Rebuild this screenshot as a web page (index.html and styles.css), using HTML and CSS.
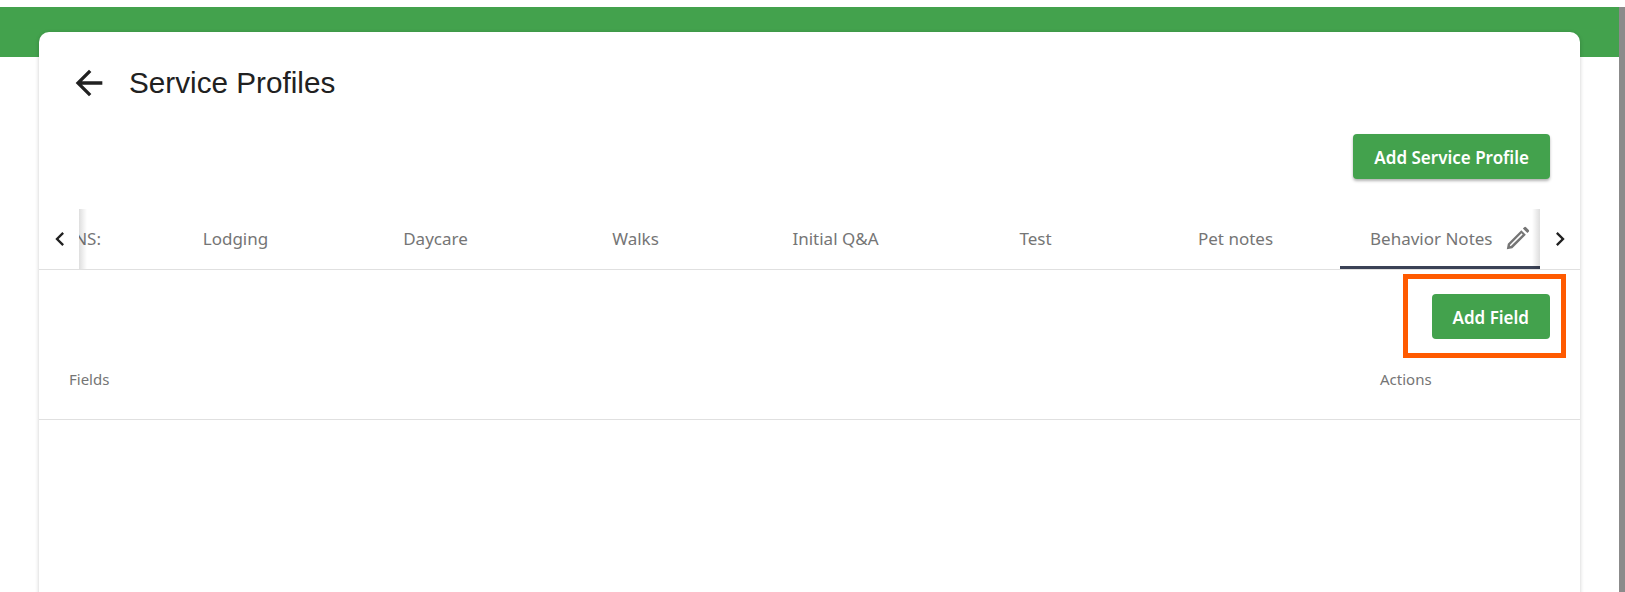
FILE: index.html
```html
<!DOCTYPE html>
<html lang="en">
<head>
  <meta charset="UTF-8">
  <meta name="viewport" content="width=device-width, initial-scale=1.0">
  <title>Service Profiles</title>
  <link rel="stylesheet" href="styles.css">
</head>
<body>

<div class="page">
  <div class="main">
    <div class="green-band"></div>

    <div class="card">
      <div class="card-title">
        <svg class="back-icon" viewBox="0 0 24 24"><path d="M20 11H7.83l5.59-5.59L12 4l-8 8 8 8 1.41-1.41L7.83 13H20v-2z"/></svg>
        <h1>Service Profiles</h1>
      </div>

      <div class="toolbar">
        <button class="btn btn-raised">Add Service Profile</button>
      </div>

      <div class="tabs">
        <div class="scroll-btn scroll-left">
          <svg viewBox="0 0 24 24"><path d="M15.41 16.59L10.83 12l4.58-4.59L14 6l-6 6 6 6 1.41-1.41z"/></svg>
        </div>
        <div class="tab-track">
          <div class="tab tab-first">QUESTIONS:</div>
          <div class="tab">Lodging</div>
          <div class="tab">Daycare</div>
          <div class="tab">Walks</div>
          <div class="tab">Initial Q&amp;A</div>
          <div class="tab">Test</div>
          <div class="tab">Pet notes</div>
          <div class="tab tab-active">
            Behavior Notes
            <svg class="edit-icon" viewBox="0 0 24 24"><path fill-rule="evenodd" d="M2.5 21.5L3.4 16.6L15.4 4.6L19.4 8.6L7.4 20.6ZM5.5 17.6L5.2 18.8L6.4 18.5L16.6 8.4L15.6 7.4ZM16.8 3.2L18 2Q18.8 1.3 19.6 2L22 4.4Q22.7 5.2 22 6L20.8 7.2Z"/></svg>
          </div>
        </div>
        <div class="scroll-btn scroll-right">
          <svg viewBox="0 0 24 24"><path d="M8.59 16.59L13.17 12 8.59 7.41 10 6l6 6-6 6-1.41-1.41z"/></svg>
        </div>
      </div>

      <div class="field-actions">
        <div class="highlight">
          <button class="btn">Add Field</button>
        </div>
      </div>

      <div class="table-head">
        <div>Fields</div>
        <div class="col-actions">Actions</div>
      </div>
    </div>
  </div>

  <div class="scrollbar"></div>
</div>

</body>
</html>
```

FILE: styles.css
```css
html, body {
  height: 100%;
}

body {
  font-family: "Noto Sans", "Liberation Sans", sans-serif;
  margin: 0;
  padding: 0;
  background-color: #fff;
  overflow: hidden;
}

.page {
  display: flex;
  height: 585px;
  margin-top: 7px;
}

.main {
  flex: 1;
  overflow: hidden;
}

.scrollbar {
  width: 6px;
  background-color: #8b8b8b;
}

.green-band {
  height: 50px;
  background-color: #43a24d;
}

.card {
  height: 600px;
  margin: -25px 39px 0;
  background-color: #fff;
  border-radius: 10px 10px 0 0;
  box-shadow: 0 1px 4px rgba(0, 0, 0, 0.2);
}

.card-title {
  display: flex;
  align-items: center;
  height: 40px;
  padding: 31px 0 0 30px;
}

.back-icon {
  width: 40px;
  height: 40px;
  fill: #212121;
}

.card-title h1 {
  margin: 0 0 0 20px;
  font-family: "Liberation Sans", Arial, sans-serif;
  font-size: 29.7px;
  font-weight: 400;
  color: #212121;
}

.toolbar {
  display: flex;
  justify-content: flex-end;
  padding: 31px 30px 30px 0;
}

.btn {
  height: 45px;
  padding: 2px 21px 0;
  border: none;
  border-radius: 4px;
  background-color: #43a24d;
  color: #fff;
  font-family: inherit;
  font-size: 17px;
  font-weight: 600;
}

.btn-raised {
  box-shadow: 0 2px 3px rgba(0, 0, 0, 0.3);
}

.tabs {
  display: flex;
  height: 60px;
  border-bottom: 1px solid #e0e0e0;
}

.scroll-btn {
  position: relative;
  display: flex;
  align-items: center;
  justify-content: center;
  flex: 0 0 40px;
  background-color: #fff;
}

.scroll-btn svg {
  width: 28px;
  height: 28px;
  fill: #212121;
}

.scroll-left svg {
  margin-left: 1px;
}

/* fade over the tabs, next to the arrows */
.scroll-left::after,
.scroll-right::after {
  content: "";
  position: absolute;
  top: 0;
  bottom: 0;
  width: 8px;
}

.scroll-left::after {
  left: 100%;
  background: linear-gradient(to right, rgba(0, 0, 0, 0.13), rgba(0, 0, 0, 0));
}

.scroll-right::after {
  right: 100%;
  background: linear-gradient(to left, rgba(0, 0, 0, 0.13), rgba(0, 0, 0, 0));
}

.tab-track {
  display: flex;
  flex: 1;
  justify-content: flex-end;
  overflow: hidden;
}

.tab {
  display: flex;
  align-items: center;
  justify-content: center;
  flex: 0 0 200px;
  box-sizing: border-box;
  padding: 0 9px 2px 0;
  color: #757575;
  font-size: 17px;
}

.tab-first {
  justify-content: flex-end;
  padding-right: 39px;
  flex-basis: 150px;
}

.tab-active {
  justify-content: flex-start;
  padding: 1px 0 0 30px;
  border-bottom: 3px solid #3b4256;
}

.edit-icon {
  width: 27px;
  height: 27px;
  margin-left: 11px;
  fill: #757575;
}

.field-actions {
  display: flex;
  justify-content: flex-end;
  padding: 24px 30px 0 0;
}

.highlight {
  position: relative;
  display: flex;
}

.highlight::after {
  content: "";
  position: absolute;
  top: -20px;
  right: -16px;
  bottom: -19px;
  left: -29px;
  border: 5px solid #ff5a00;
}

.table-head {
  display: flex;
  justify-content: space-between;
  align-items: center;
  height: 80px;
  padding: 0 30px;
  border-bottom: 1px solid #e0e0e0;
  color: #757575;
  font-size: 15px;
}

.col-actions {
  width: 170px;
}
```
